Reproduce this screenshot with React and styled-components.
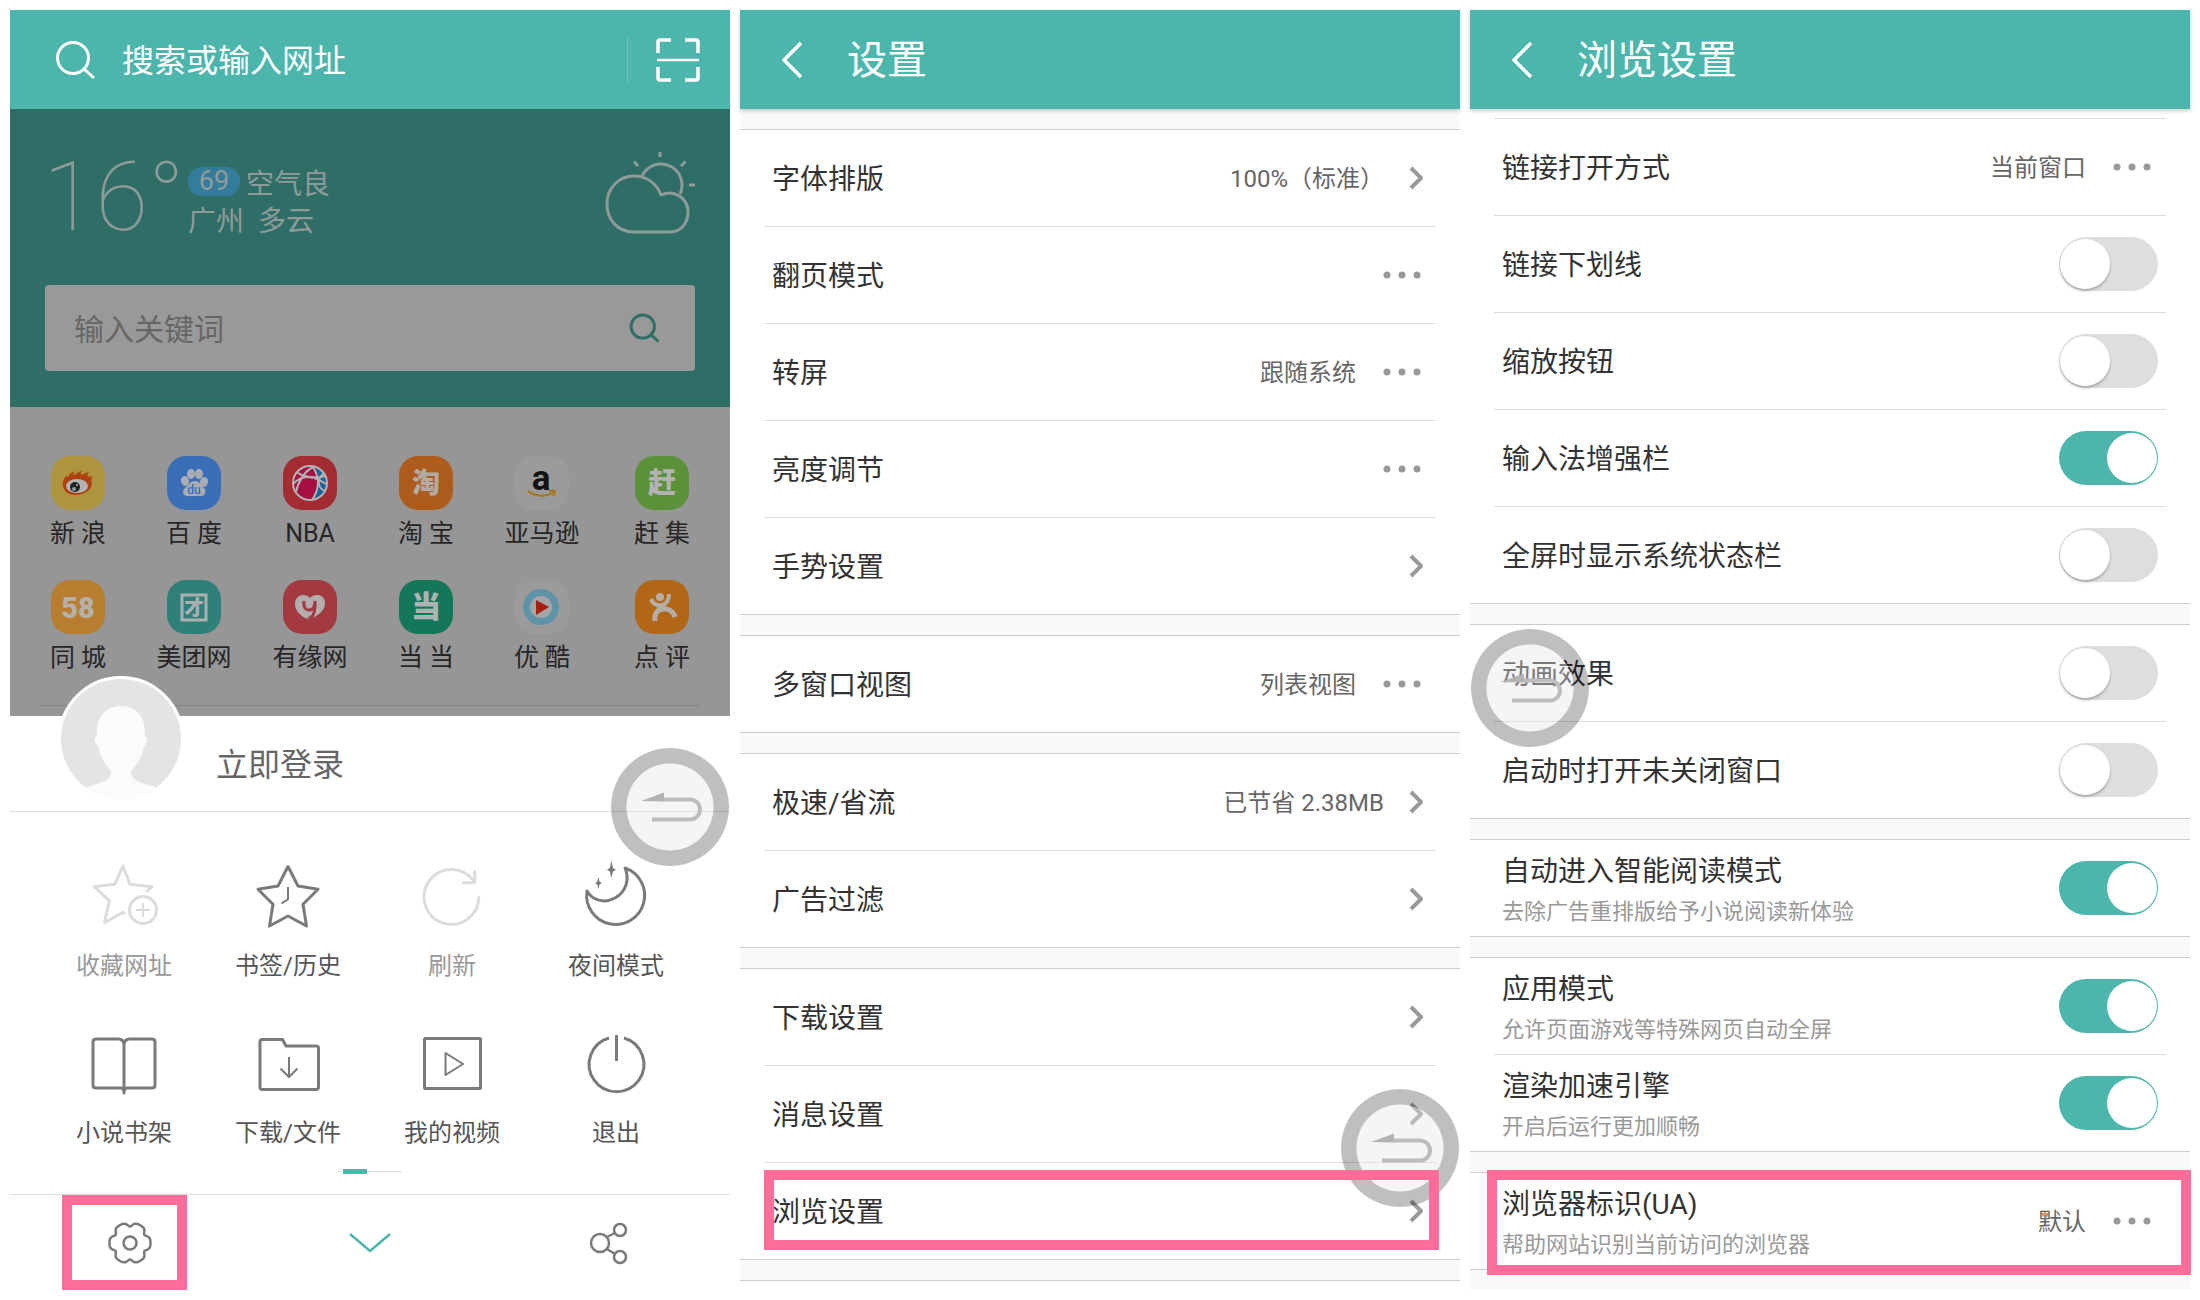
import React, {useState} from 'react'
import styled, {createGlobalStyle} from "styled-components"

const TEAL = "#4db6ac"
const PINK = "#ff6d98"

const sites = [
    {name: "新 浪", color: "#ae943c", logo: "sina"},
    {name: "百 度", color: "#3a6fb8", logo: "baidu"},
    {name: "NBA", color: "#a32c33", logo: "nba"},
    {name: "淘 宝", color: "#ae5c1c", logo: "taobao"},
    {name: "亚马逊", color: "#9b9b9b", logo: "amazon"},
    {name: "赶 集", color: "#5b9139", logo: "ganji"},
    {name: "同 城", color: "#b97d30", logo: "wuba"},
    {name: "美团网", color: "#30807a", logo: "meituan"},
    {name: "有缘网", color: "#a43a41", logo: "youyuan"},
    {name: "当 当", color: "#15775a", logo: "dangdang"},
    {name: "优 酷", color: "#9b9b9b", logo: "youku"},
    {name: "点 评", color: "#b16716", logo: "dianping"},
]

const actions = [
    {name: "收藏网址", icon: "favorite", disabled: true},
    {name: "书签/历史", icon: "history"},
    {name: "刷新", icon: "refresh", disabled: true},
    {name: "夜间模式", icon: "night"},
    {name: "小说书架", icon: "book"},
    {name: "下载/文件", icon: "folder"},
    {name: "我的视频", icon: "video"},
    {name: "退出", icon: "power"},
]

const settings = [
    [
        {title: "字体排版", value: "100%（标准）", type: "link"},
        {title: "翻页模式", type: "menu"},
        {title: "转屏", value: "跟随系统", type: "menu"},
        {title: "亮度调节", type: "menu"},
        {title: "手势设置", type: "link"},
    ],
    [
        {title: "多窗口视图", value: "列表视图", type: "menu"},
    ],
    [
        {title: "极速/省流", value: "已节省 2.38MB", type: "link"},
        {title: "广告过滤", type: "link"},
    ],
    [
        {title: "下载设置", type: "link"},
        {title: "消息设置", type: "link"},
        {title: "浏览设置", type: "link", mark: "row"},
    ],
]

const browsing = [
    [
        {title: "链接打开方式", value: "当前窗口", type: "menu"},
        {title: "链接下划线", type: "toggle"},
        {title: "缩放按钮", type: "toggle"},
        {title: "输入法增强栏", type: "toggle", on: true},
        {title: "全屏时显示系统状态栏", type: "toggle"},
    ],
    [
        {title: "动画效果", type: "toggle"},
        {title: "启动时打开未关闭窗口", type: "toggle"},
    ],
    [
        {title: "自动进入智能阅读模式", note: "去除广告重排版给予小说阅读新体验", type: "toggle", on: true},
    ],
    [
        {title: "应用模式", note: "允许页面游戏等特殊网页自动全屏", type: "toggle", on: true},
        {title: "渲染加速引擎", note: "开启后运行更加顺畅", type: "toggle", on: true},
    ],
    [
        {title: "浏览器标识(UA)", note: "帮助网站识别当前访问的浏览器", value: "默认", type: "menu", mark: "full"},
    ],
]

// six wide teeth with a notch between each pair
const gearPath = Array.from({length: 120}, (_, i) => {
    const a = (i * Math.PI) / 60
    const r = 20.5 - 4 * Math.pow((1 + Math.cos(6 * a)) / 2, 3)
    return `${i ? "L" : "M"}${(22 + r * Math.sin(a)).toFixed(2)} ${(22 - r * Math.cos(a)).toFixed(2)}`
}).join("") + "Z"

const logos = {
    sina: (
        <>
            <path d="M12 30C11 26 13 22 16 19C16 21 16 21 17 21C18 18 20 17 23 15C22 18 22 18 24 19C25 17 28 16 31 15C29 18 30 18 31 19C33 17 35 17 38 16C36 19 36 19 37 21C39 20 40 21 42 20C39 24 41 25 41 28C40 35 32 39 25 39C18 39 13 36 12 30Z" fill="#b0400f" />
            <ellipse cx="26" cy="30" rx="11" ry="7" fill="#b3b3b3" />
            <circle cx="24" cy="31" r="5" fill="#1d2426" />
            <circle cx="23" cy="33" r="2" fill="#999" />
            <circle cx="26" cy="29" r="1" fill="#bbb" />
        </>
    ),
    baidu: (
        <>
            <g fill="#a9adb3">
                <ellipse cx="24" cy="18" rx="4" ry="5" />
                <ellipse cx="32" cy="18" rx="4" ry="5" />
                <ellipse cx="18" cy="25" rx="4" ry="5" transform="rotate(-15 18 25)" />
                <ellipse cx="37" cy="26" rx="4" ry="5" transform="rotate(15 37 26)" />
                <path d="M28 25C33 25 34 30 37 32C40 35 38 41 33 40H22C17 41 14 36 18 32C22 29 23 25 28 25Z" />
            </g>
            <LogoText x="27" y="38" size="12" weight="500" color="#3a6fb8">du</LogoText>
        </>
    ),
    nba: (
        <>
            <circle cx="27" cy="27" r="17" fill="#a60f3f" />
            <path d="M32 10.500A17 17 0 0 1 30 43.500C34 34 36 20 32 10.500Z" fill="#14659c" />
            <g fill="none" stroke="#b5b0b2" strokeWidth="2">
                <circle cx="27" cy="27" r="17" />
                <path d="M14 16C20 22 34 22 43 20M10 28C17 21 24 20 30 22M13 36C15 26 22 14 31 11M30 11C37 22 36 34 29 44M41 17C33 24 35 32 42 35M31 22C38 24 42 28 44 28" />
            </g>
        </>
    ),
    taobao: <LogoText x="27" y="37" size="28" weight="900" color="#b3aca6">淘</LogoText>,
    amazon: (
        <>
            <LogoText x="26" y="34" size="35" weight="700" color="#131313">a</LogoText>
            <path d="M13 35C21 41 31 41 38 37" stroke="#a8750f" strokeWidth="2" fill="none" />
            <path d="M34 35.500C37 34.500 39 34.500 40 35.500C40 37 39 39 38 40" stroke="#a8750f" strokeWidth="2" fill="none" />
        </>
    ),
    ganji: <LogoText x="27" y="37" size="28" weight="900" color="#b3b3b3">赶</LogoText>,
    wuba: <LogoText x="27" y="38" size="29" weight="900" color="#b5b0aa">58</LogoText>,
    meituan: (
        <>
            <rect x="15" y="15" width="24" height="25" fill="none" stroke="#a9b0af" strokeWidth="3" />
            <LogoText x="27" y="35" size="20" weight="900" color="#a9b0af">才</LogoText>
        </>
    ),
    youyuan: (
        <>
            <path d="M27 18C23 13 12 14 12 24C12 31 18 36 24 39C25 37 26 36 28 35C26 38 26 39 25 40C35 36 42 31 42 23C42 14 31 13 27 18Z" fill="#b3adad" />
            <path d="M21 21C20 26 22 30 26 30C30 30 32 26 32 21M32 21C33 30 31 35 27 40" stroke="#a43a41" strokeWidth="3" fill="none" />
        </>
    ),
    dangdang: <LogoText x="27" y="37" size="30" weight="900" color="#adb3b0">当</LogoText>,
    youku: (
        <>
            <circle cx="26" cy="27" r="14.500" fill="#a5a5a5" stroke="#5f93a8" strokeWidth="7" />
            <path d="M21 20L34 27L21 35Z" fill="#a3200f" />
        </>
    ),
    dianping: (
        <>
            <circle cx="25" cy="17" r="4" fill="#b5aea6" />
            <g fill="none" stroke="#b5aea6" strokeWidth="4">
                <path d="M16 19C18 25 24 26 28 25C32 23 34 20 34 14" />
                <path d="M20 41C19 34 22 30 27 29C33 28 38 31 40 37" strokeWidth="5" />
                <path d="M22 25C25 28 27 29 30 30" />
            </g>
        </>
    ),
}

const glyphs = {
    favorite: (
        <>
            <path d="M54 28L60 22.700L38 20.300L31 2L22.700 20.300L2 22.700L17.400 36.700L12.500 58.700L31 48.300L33 50" />
            <circle cx="51" cy="46" r="13.500" />
            <path d="M44 46H58M51 39V53" strokeWidth="2" />
        </>
    ),
    history: (
        <>
            <path d="M32 2.500L42 22L62 25.300L47 40.300L50.500 62L32 52L13.500 62L17 40.300L2 25.300L22 22Z" />
            <path d="M32 23V35.300L25.500 39.300" strokeWidth="2" />
        </>
    ),
    refresh: (
        <>
            <path d="M58.800 32.300A27.400 27.400 0 1 1 54 17.500" />
            <path d="M54.700 6.700V18.700H42.400" />
        </>
    ),
    night: (
        <>
            <path d="M41 4A29 29 0 1 1 3 27C8 36 20 40 31 34C42 28 46 15 41 4Z" />
            <path d="M27.400 -3L29 4L32 5.700L29 7.400L27.400 14L25.800 7.400L23 5.700L25.800 4ZM14.400 13L15.600 17.800L18 19L15.600 20.200L14.400 25L13.200 20.200L11 19L13.200 17.800Z" fill="currentColor" stroke="none" />
        </>
    ),
    book: <path d="M32 13V59M32 14Q32 8 26 8H4Q1 8 1 11V54Q1 57 4 57H29Q32 57 32 62Q32 57 35 57H60Q63 57 63 54V11Q63 8 60 8H38Q32 8 32 14" />,
    folder: (
        <>
            <path d="M4 11Q4 8.500 6.500 8.500H26.500L30 15H60Q62.500 15 62.500 17V56Q62.500 58.500 60 58.500H6.500Q4 58.500 4 56Z" />
            <path d="M33 26V46M24.500 37.500L33 46L41.500 37.500" strokeWidth="2" />
        </>
    ),
    video: (
        <>
            <rect x="4.500" y="7.500" width="56" height="50" rx="1" />
            <path d="M25.500 22L43 33L25.500 44Z" strokeWidth="2" />
        </>
    ),
    power: <path d="M25 7A27.400 27.400 0 1 0 40 7M32.500 4V30" />,
}

const SearchIcon = ({size = 40, width = 3}) => (
    <Icon width={size} height={size} viewBox="0 0 40 40" $line={width}>
        <circle cx="17" cy="18" r="15.500" />
        <path d="M28 29L38 38" />
    </Icon>
)

const BackIcon = () => (
    <Icon width="20" height="36" viewBox="0 0 20 36" $line={3.5}>
        <path d="M19 1L2 18L19 35" />
    </Icon>
)

const MoreIcon = () => (
    <Icon width="44" height="8" viewBox="0 0 44 8">
        <g fill="currentColor" stroke="none">
            <circle cx="7" cy="4" r="3.500" />
            <circle cx="22" cy="4" r="3.500" />
            <circle cx="37" cy="4" r="3.500" />
        </g>
    </Icon>
)

const NextIcon = () => (
    <Icon width="16" height="24" viewBox="0 0 16 24" $line={4}>
        <path d="M3 2L13 12L3 22" />
    </Icon>
)

const FloatBack = ({place}) => (
    <Float $place={place} aria-label="返回">
        <svg width="118" height="118" viewBox="0 0 118 118">
            <path d="M59 0A59 59 0 1 0 59.010 0ZM59 15.500A43.500 43.500 0 1 1 58.990 15.500Z" fill="rgba(0,0,0,0.250)" fillRule="evenodd" />
            <circle cx="59" cy="59" r="43.500" fill="rgba(230,230,230,0.400)" />
            <path d="M52 51.500H79A10 10 0 0 1 79 71.500H41" fill="none" stroke="#bcbcbc" strokeWidth="4" />
            <path d="M30 53L53 44.500V53.500Z" fill="#b3b3b3" />
        </svg>
    </Float>
)

const SettingRow = ({item}) => {
    const [on, setOn] = useState(!!item.on)
    const kind = {link: "a", menu: "button", toggle: "label"}[item.type]
    const extra = item.type === "link" ? {href: "#"} : {}
    return (
        <Item>
            <Row as={kind} {...extra} $toggle={item.type === "toggle"}>
                <Words $two={!!item.note}>
                    <Title>{item.title}</Title>
                    {item.note && <Note>{item.note}</Note>}
                </Words>
                {item.value && <Value>{item.value}</Value>}
                {item.type === "link" && <NextIcon />}
                {item.type === "menu" && <MoreIcon />}
                {item.type === "toggle" && (
                    <Switch type="checkbox" checked={on} onChange={() => setOn(!on)} />
                )}
            </Row>
            {item.mark && <RowMark $full={item.mark === "full"} />}
        </Item>
    )
}

const Groups = ({data}) => data.map((group, i) => (
    <Group key={i}>
        {group.map((item) => <SettingRow key={item.title} item={item} />)}
    </Group>
))

const App = () => {
    return (
        <Container>
            <GlobalStyle />

            <Panel $white>
                <Address>
                    <SearchIcon />
                    <AddressInput placeholder="搜索或输入网址" aria-label="搜索或输入网址" />
                    <ScanButton aria-label="扫一扫">
                        <Icon width="44" height="44" viewBox="0 0 44 44" $line={3.5}>
                            <path d="M2 15V4Q2 2 4 2H15M29 2H40Q42 2 42 4V15M42 29V40Q42 42 40 42H29M15 42H4Q2 42 2 40V29" />
                            <path d="M1 22H43" strokeWidth="2.500" />
                        </Icon>
                    </ScanButton>
                </Address>
                <Hero>
                    <Weather>
                        <Degree>16°</Degree>
                        <Info>
                            <Line><Badge>69</Badge>空气良</Line>
                            <Line>广州{"\u00a0\u00a0"}多云</Line>
                        </Info>
                        <Icon width="94" height="88" viewBox="0 0 94 88" $line={3}>
                            <path d="M33 83C16 83 6 70 6 55C6 39 18 27 33 27C46 27 56 35 60 46C73 40 87 49 87 63C87 75 79 83 69 83Z" />
                            <path d="M41 27A21 21 0 0 1 79 45M59 3V8M33 12.500L37 17M84.500 12.500L80 17M88 36H94" />
                        </Icon>
                    </Weather>
                    <SearchBox>
                        <SearchInput placeholder="输入关键词" aria-label="输入关键词" />
                        <SearchIcon size={30} width={4} />
                    </SearchBox>
                </Hero>
                <Sites>
                    <SiteGrid>
                        {sites.map((site) => (
                            <Site href="#" key={site.name}>
                                <Tile $color={site.color}>
                                    <svg width="54" height="54" viewBox="0 0 54 54">{logos[site.logo]}</svg>
                                </Tile>
                                {site.name}
                            </Site>
                        ))}
                    </SiteGrid>
                    <Rule />
                </Sites>

                <Profile>
                    <Avatar>
                        <svg width="120" height="120" viewBox="0 0 120 120">
                            <defs>
                                <clipPath id="round"><circle cx="60" cy="60" r="60" /></clipPath>
                            </defs>
                            <circle cx="60" cy="60" r="60" fill="#e4e4e4" />
                            <g clipPath="url(#round)" fill="#fbfbfb">
                                <path d="M60 27C75 27 85 37 84 57C87 59 87 65 83 67C81 79 75 86 70 92C70 102 78 103 97 109L97 125H23L23 109C42 103 50 102 50 92C45 86 39 79 37 67C33 65 33 59 36 57C35 37 45 27 60 27Z" />
                            </g>
                        </svg>
                    </Avatar>
                    <Login>立即登录</Login>
                    <FloatBack place="home" />
                </Profile>
                <Actions>
                    {actions.map((action) => (
                        <Action key={action.name} disabled={action.disabled}>
                            <Icon width="64" height="64" viewBox="0 0 64 64" $line={3}>{glyphs[action.icon]}</Icon>
                            <span>{action.name}</span>
                        </Action>
                    ))}
                </Actions>
                <Pager><PagerDot /></Pager>
                <BottomBar>
                    <BarButton aria-label="设置">
                        <Icon width="44" height="44" viewBox="0 0 44 44" $line={2.5}>
                            <path d={gearPath} />
                            <circle cx="22" cy="22" r="6.500" />
                        </Icon>
                        <BarMark />
                    </BarButton>
                    <BarButton aria-label="收起" $active>
                        <Icon width="44" height="20" viewBox="0 0 44 20" $line={2.5}>
                            <path d="M2 1L22 18L42 1" />
                        </Icon>
                    </BarButton>
                    <BarButton aria-label="分享">
                        <Icon width="40" height="42" viewBox="1 0 40 42" $line={2.5}>
                            <circle cx="11" cy="21" r="9" />
                            <circle cx="31" cy="8" r="6" />
                            <circle cx="31" cy="35" r="6" />
                            <path d="M18 15L26 11M18 27L26 32" />
                        </Icon>
                    </BarButton>
                </BottomBar>
            </Panel>

            <Panel>
                <Header>
                    <BackButton aria-label="返回"><BackIcon /></BackButton>
                    <Heading>设置</Heading>
                </Header>
                <Spacer />
                <Groups data={settings} />
                <Rest />
                <FloatBack place="settings" />
            </Panel>

            <Panel>
                <Header>
                    <BackButton aria-label="返回"><BackIcon /></BackButton>
                    <Heading>浏览设置</Heading>
                </Header>
                <Tail />
                <Groups data={browsing} />
                <FloatBack place="browsing" />
            </Panel>
        </Container>
    )
}

export default App

const GlobalStyle = createGlobalStyle`
*{
    box-sizing: border-box;
}
body{
    margin: 0;
    background: #fff;
    font-family: Roboto, "Noto Sans CJK SC", sans-serif;
}
button, input{
    font-family: inherit;
    border: 0;
    padding: 0;
    background: none;
    outline: none;
}
a{
    color: inherit;
    text-decoration: none;
}
h1, ul{
    margin: 0;
    padding: 0;
    list-style: none;
}
`
const Container = styled.div`
display: grid;
grid-template-columns: repeat(3, 1fr);
gap: 10px;
padding: 10px;
`
const Panel = styled.section`
position: relative;
display: flex;
flex-direction: column;
background: ${(p) => (p.$white ? "#fff" : "#f9f9f9")};
`
const Icon = styled.svg`
display: block;
flex: none;
overflow: visible;
fill: none;
stroke: currentColor;
stroke-width: ${(p) => p.$line || 2};
stroke-linejoin: round;
`
const LogoGlyph = styled.text`
font-family: Roboto, "Noto Sans CJK SC", sans-serif;
font-size: ${(p) => p.$size}px;
font-weight: ${(p) => p.$weight};
text-anchor: middle;
`
function LogoText({x, y, size, weight, color, children}) {
    return <LogoGlyph x={x} y={y} $size={size} $weight={weight} fill={color}>{children}</LogoGlyph>
}

const Address = styled.div`
display: flex;
align-items: center;
height: 99px;
padding: 0 30px 0 46px;
background: ${TEAL};
color: #fff;
`
const AddressInput = styled.input`
flex: 1;
min-width: 0;
margin-left: 26px;
padding-top: 2px;
font-size: 32px;
line-height: 40px;
color: #fff;
&::placeholder{
    color: #fff;
    opacity: 1;
}
`
const ScanButton = styled.button`
padding-left: 28px;
border-left: 1px solid #71c5bd;
color: #fff;
`
const Hero = styled.div`
height: 298px;
padding: 40px 35px 0;
background: #2f6e66;
`
const Weather = styled.div`
display: flex;
align-items: flex-start;
height: 96px;
color: #8f9b99;
`
const Degree = styled.div`
width: 143px;
margin-left: -2px;
font-size: 96px;
font-weight: 100;
line-height: 96px;
`
const Info = styled.div`
flex: 1;
padding: 14px 0 0 2px;
font-size: 28px;
`
const Line = styled.div`
display: flex;
align-items: center;
height: 37px;
`
const Badge = styled.span`
width: 52px;
height: 29px;
margin-right: 6px;
border-radius: 14px;
background: #337c9c;
font-size: 27px;
line-height: 29px;
text-align: center;
`
const SearchBox = styled.div`
display: flex;
align-items: center;
height: 86px;
margin-top: 40px;
padding: 0 35px 0 29px;
border-radius: 4px;
background: #999;
color: #2f6e66;
`
const SearchInput = styled.input`
flex: 1;
min-width: 0;
padding-top: 3px;
font-size: 30px;
line-height: 40px;
&::placeholder{
    color: #666;
    opacity: 1;
}
`
const Sites = styled.div`
padding: 49px 0 10px;
background: #969696;
`
const SiteGrid = styled.div`
display: grid;
grid-template-columns: repeat(5, 116fr) 124fr;
row-gap: 30px;
padding: 0 6px 0 10px;
`
const Site = styled.a`
display: flex;
flex-direction: column;
align-items: center;
gap: 8px;
font-size: 25px;
line-height: 32px;
color: #262626;
white-space: nowrap;
`
const Tile = styled.span`
width: 54px;
height: 54px;
border-radius: 19px;
background: ${(p) => p.$color};
svg{
    display: block;
    overflow: visible;
}
`
const Rule = styled.div`
height: 1px;
margin: 31px 31px 0;
background: #858585;
`
const Profile = styled.div`
position: relative;
display: flex;
align-items: center;
height: 96px;
padding-left: 206px;
border-bottom: 1px solid #ddd;
background: #fff;
`
const Avatar = styled.div`
position: absolute;
left: 48px;
top: -40px;
height: 126px;
border: 3px solid #fff;
border-radius: 50%;
background: #fff;
`
const Login = styled.button`
padding-top: 3px;
font-size: 32px;
line-height: 40px;
color: #666;
`
const Actions = styled.div`
display: grid;
grid-template-columns: repeat(4, 1fr);
row-gap: 49px;
padding: 52px 32px 0;
background: #fff;
`
const Action = styled.button`
display: flex;
flex-direction: column;
align-items: center;
gap: 22px;
font-size: 24px;
line-height: 32px;
color: #7a7a7a;
span{
    color: #555;
}
&:disabled{
    color: #dcdcdc;
}
&:disabled span{
    color: #999;
}
`
const Pager = styled.div`
display: flex;
align-items: center;
align-self: center;
width: 64px;
height: 5px;
margin: 20px 0;
background: linear-gradient(#ddd, #ddd) center / 100% 1px no-repeat;
`
const PagerDot = styled.span`
width: 24px;
height: 5px;
margin-left: 5px;
background: ${TEAL};
`
const BottomBar = styled.div`
display: grid;
grid-template-columns: repeat(3, 1fr);
height: 96px;
border-top: 1px solid #ddd;
`
const BarButton = styled.button`
position: relative;
display: flex;
align-items: center;
justify-content: center;
color: ${(p) => (p.$active ? TEAL : "#7a7a7a")};
`
const Mark = styled.span`
position: absolute;
border: 10px solid ${PINK};
pointer-events: none;
`
const BarMark = styled(Mark)`
top: 0;
bottom: 0;
left: 52px;
width: 125px;
`
const RowMark = styled(Mark)`
z-index: 3;
top: ${(p) => (p.$full ? -3 : 7)}px;
bottom: ${(p) => (p.$full ? -6 : 9)}px;
left: ${(p) => (p.$full ? -7 : 0)}px;
right: ${(p) => (p.$full ? -25 : -3)}px;
`
const Header = styled.header`
position: relative;
z-index: 1;
display: flex;
align-items: center;
height: 99px;
padding-left: 42px;
background: ${TEAL};
box-shadow: 0 2px 4px rgba(0, 0, 0, 0.2);
color: #fff;
`
const BackButton = styled.button`
color: #fff;
`
const Heading = styled.h1`
margin-left: 45px;
padding-top: 2px;
font-size: 40px;
font-weight: 400;
line-height: 48px;
`
const Spacer = styled.div`
height: 20px;
`
const Tail = styled.div`
height: 10px;
padding: 0 24px;
background: #fff;
&::after{
    content: "";
    display: block;
    height: 9px;
    border-bottom: 1px solid #ddd;
}
`
const Group = styled.ul`
margin-bottom: 20px;
padding: 0 24px;
border: solid #ccc;
border-width: 1px 0;
background: #fff;
${Tail} + &{
    border-top: 0;
}
`
const Item = styled.li`
position: relative;
border-bottom: 1px solid #ddd;
&:last-child{
    border-bottom: 0;
}
`
const Row = styled.div`
display: flex;
align-items: center;
gap: 24px;
width: 100%;
height: 96px;
padding: 0 ${(p) => (p.$toggle ? 8 : 12)}px 0 8px;
color: #999;
text-align: left;
cursor: pointer;
`
const Words = styled.span`
display: flex;
flex: 1;
flex-direction: column;
padding-top: ${(p) => (p.$two ? 7 : 3)}px;
line-height: 40px;
`
const Title = styled.span`
font-size: 28px;
color: #333;
`
const Note = styled.span`
font-size: 22px;
color: #999;
`
const Value = styled.span`
padding-top: 2px;
font-size: 24px;
line-height: 40px;
color: #666;
`
const Switch = styled.input`
appearance: none;
position: relative;
width: 99px;
height: 54px;
margin: 0;
border-radius: 27px;
background: ${(p) => (p.checked ? TEAL : "#dedede")};
cursor: pointer;
&::before{
    content: "";
    position: absolute;
    top: 2px;
    left: ${(p) => (p.checked ? 48 : 1)}px;
    width: 50px;
    height: 50px;
    border-radius: 50%;
    background: #fff;
    box-shadow: ${(p) => (p.checked ? "none" : "0 2px 3px rgba(0, 0, 0, 0.25)")};
}
`
const Rest = styled.div`
flex: 1;
border-top: 1px solid #ccc;
background: #fff;
`
const spots = {
    home: "right: 1px; top: 32px;",
    settings: "right: 1px; bottom: 83px;",
    browsing: "left: 1px; top: 619px;",
}
const Float = styled.button`
position: absolute;
z-index: 2;
${(p) => spots[p.$place]}
width: 118px;
height: 118px;
cursor: pointer;
svg{
    display: block;
}
`
